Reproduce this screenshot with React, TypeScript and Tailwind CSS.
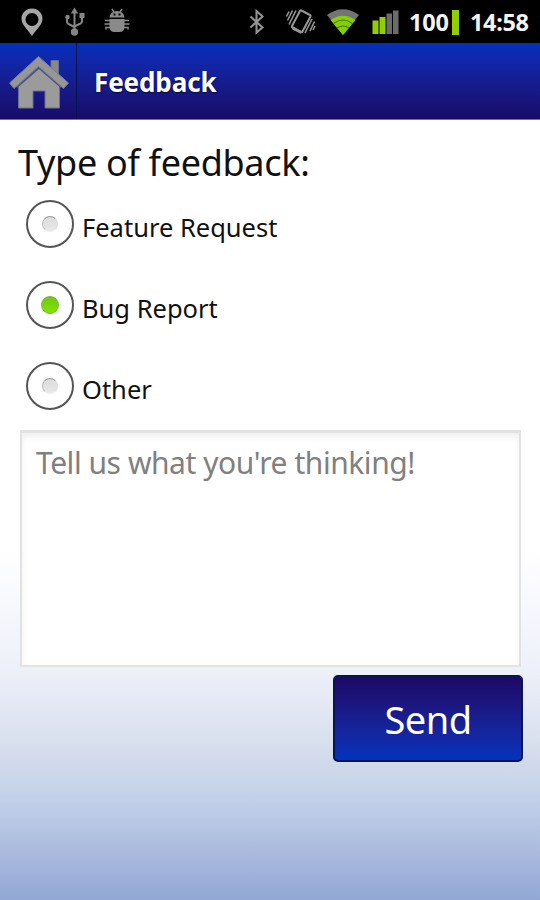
import { useState } from "react";

const options = ["Feature Request", "Bug Report", "Other"];

function StatusBar() {
    return (
        <div className="flex h-[43px] bg-black text-[#f4f4f4]">
            <svg width="400" height="43" viewBox="0 0 400 43" className="shrink-0">
                {/* location */}
                <path fillRule="evenodd" fill="#a6a6a6" d="M32 8.500c-6 0-10.500 4.400-10.500 10.200C21.500 25 28 29.500 32 36c4-6.500 10.500-11 10.500-17.300C42.500 12.900 38 8.500 32 8.500zM32 13a6.500 6.500 0 1 1 0 13a6.500 6.500 0 0 1 0-13z" />
                {/* usb */}
                <g fill="none" stroke="#858585" strokeWidth="2">
                    <path d="M74.500 12v20M67 18v3.500q0 2 2.500 3l5 2.500M82 17v4q0 2-2.500 3l-5 2.500" />
                </g>
                <g fill="#858585">
                    <path d="M74.500 7.500l3.700 6h-7.400z" />
                    <circle cx="67.500" cy="17" r="2.300" />
                    <path d="M79.500 13h5v5h-5z" />
                    <circle cx="74.500" cy="32" r="3.700" />
                </g>
                {/* debug bug */}
                <g fill="#8a8a8a">
                    <path fillRule="evenodd" d="M109.500 17.500q1-6.500 7.500-6.500t7.500 6.500zM113.500 13.500v2h2v-2zM118.500 13.500v2h2v-2z" />
                    <path d="M109.500 19h15v8q0 5-5 5h-5q-5 0-5-5z" />
                </g>
                <path d="M112 9l2 3M122 9l-2 3M110 20.500h-5M110 24h-5.500M110 27.500h-4v2M124 20.500h5M124 24h5.500M124 27.500h4v2" fill="none" stroke="#8a8a8a" strokeWidth="1.500" />
                {/* bluetooth */}
                <path d="M250.500 16.500l12 11-6 5V11l6 5.500-12 11" fill="none" stroke="#969696" strokeWidth="2" />
                {/* vibrate */}
                <g fill="none" stroke="#969696">
                    <path d="M301.500 10.500l8.500 4.500q1 .5.500 1.500l-8 15q-.5 1-1.500.5l-8.500-4.500q-1-.5-.5-1.500l8-15q.5-1 1.500-.5z" strokeWidth="2" />
                    <path d="M292 27l9.500 5M292.500 28.500l8.500 4.500" strokeWidth="1.800" />
                    <path d="M296 10.500l-7 14M292.500 10.500l-5 10M289 11.500l-2.500 5M312 19l-7 14M314.500 21.500l-4.500 9.500M315 26l-2 4" strokeWidth="1.600" />
                </g>
                {/* wifi */}
                <path d="M327 15q16-11.500 32 0L343 35z" fill="#737373" />
                <path d="M330.500 20q12.500-8.500 25 0L343 35z" fill="#86cf00" />
                <path d="M333.500 23.500q9.500-7 19 0M337 28q6-4 12 0" fill="none" stroke="#477a00" strokeWidth="1.200" />
                {/* signal */}
                <path d="M372.500 20.500h6V34h-6zM379.500 17h6v17h-6z" fill="#92cf00" />
                <path d="M386.500 13.500h5.500V34h-5.500zM393 10.500h5.500V34H393z" fill="#6c6c6c" />
            </svg>
            <div className="ml-[9px] w-[43px] text-[23.500px] leading-[45px] font-bold tracking-[-0.2px]">100</div>
            <div className="mt-[10px] h-[25px] w-[7px] bg-[#91cd00]" />
            <div className="ml-[11px] text-[23.500px] leading-[45px] font-bold tracking-[-0.35px]">14:58</div>
        </div>
    );
}

function Header() {
    return (
        <div className="flex h-[77px] border-b border-[#777] bg-linear-to-b from-[#0330bd] to-[#180b68] text-white">
            <div className="w-[77px] border-r border-[#07134d]">
                <svg width="76" height="76" viewBox="0 43 76 76">
                    <g stroke="#65708c" strokeWidth="1" strokeLinejoin="round">
                        <path d="M51 60.500h7.500V76L51 69z" fill="#888" />
                        <path d="M18.500 82L39 64l20.500 18v26H45V91H33v17H18.500z" fill="#9b9b9b" />
                    </g>
                    <path d="M16 86.500l23-20 23 20" fill="none" stroke="#4a577f" strokeWidth="4" />
                    <path d="M38.500 56.500L9.500 83l4.500 5.500 24.500-22L63.500 88.500l5-5.500z" fill="#969696" stroke="#707990" strokeWidth="1" strokeLinejoin="round" />
                </svg>
            </div>
            <h1 className="ml-[17px] text-[26px] leading-[78px] font-bold tracking-[-0.1px] [text-shadow:0_1px_2px_#000a]">Feedback</h1>
        </div>
    );
}

export default function App() {
    const [selected, setSelected] = useState("Bug Report");

    return (
        <div className="h-[900px] w-[540px] overflow-hidden bg-white font-['Noto_Sans',sans-serif]">
            <StatusBar />
            <Header />
            <div className="h-[780px] bg-[linear-gradient(to_bottom,#fff_55%,#eff1fa_70%,#d5ddec_81%,#bfcee7_88%,#93a7d5_100%)] pt-[18px]">
                <h2 className="ml-[18px] text-[36px] leading-[50px] tracking-[-0.3px] whitespace-nowrap text-[#111]">Type of feedback:</h2>
                <div className="mt-[12px] ml-[26px] flex flex-col gap-[33px]">
                    {options.map((option) => (
                        <button key={option} onClick={() => setSelected(option)} className="flex h-12 items-center text-left">
                            <span className="flex size-12 items-center justify-center rounded-full border-2 border-[#555] bg-white">
                                {selected === option ? (
                                    <span className="size-[18px] rounded-full border border-[#79b52d] bg-linear-to-b from-[#6fc715] to-[#80e600]" />
                                ) : (
                                    <span className="size-4 rounded-full border border-t-[#999] border-r-[#ddd] border-b-[#eee] border-l-[#bbb] bg-linear-to-b from-[#dcdcdc] to-[#e8e8e8]" />
                                )}
                            </span>
                            <span className="ml-2 pt-[5px] text-[25.500px] leading-9 whitespace-nowrap text-[#111]">{option}</span>
                        </button>
                    ))}
                </div>
                <textarea
                    placeholder="Tell us what you're thinking!"
                    className="mt-5 ml-5 block h-[237px] w-[501px] resize-none border-2 border-t-[3px] border-[#e2e2e2] bg-white px-[14px] py-[8px] text-[30px] leading-[43px] tracking-[-0.45px] shadow-[inset_0_4px_6px_#00000010] outline-none placeholder:text-[#808080]"
                />
                <button className="mt-2 ml-[333px] block h-[87px] w-[190px] rounded-[5px] border-2 border-[#08144c] bg-linear-to-b from-[#1c0865] to-[#0033bd] pt-[2px] text-[38px] tracking-[-0.5px] text-white">
                    Send
                </button>
            </div>
        </div>
    );
}
